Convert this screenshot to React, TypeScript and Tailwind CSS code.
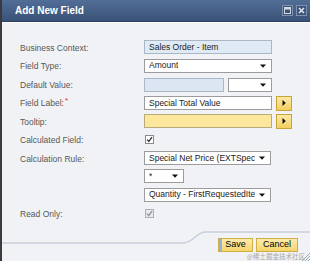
import React from "react";

const font = { fontFamily: '"Liberation Sans", Arial, sans-serif' };

function Arrow() {
  return (
    <svg width="6" height="4" viewBox="0 0 6 4" className="ml-auto shrink-0">
      <path d="M0 0.5 L6 0.5 L3 3.8 Z" fill="#111" />
    </svg>
  );
}

function Select({ text, w }: { text: string; w: string }) {
  return (
    <div
      className={`${w} h-[14px] flex items-center bg-white border border-[#9c9c9c] pl-[4px] pr-[5px] text-[8.5px] text-[#222] overflow-hidden whitespace-nowrap`}
    >
      <span className="overflow-hidden">{text}</span>
      <Arrow />
    </div>
  );
}

function ArrowButton() {
  return (
    <div className="w-[16px] h-[15px] ml-[4px] flex items-center justify-center border border-[#c9a43a] bg-gradient-to-b from-[#fdeaa6] to-[#f4cf5e]">
      <svg width="4" height="6" viewBox="0 0 4 6">
        <path d="M0.5 0 L3.8 3 L0.5 6 Z" fill="#111" />
      </svg>
    </div>
  );
}

function Checkbox({ disabled }: { disabled?: boolean }) {
  return (
    <div
      className={`ml-[1px] w-[9px] h-[9px] flex items-center justify-center border ${
        disabled ? "border-[#a9b0ba] bg-[#e6e9ee]" : "border-[#8a8a8a] bg-white"
      }`}
    >
      <svg width="7" height="7" viewBox="0 0 7 7">
        <path
          d="M1 3.6 L2.8 5.4 L6 1.2"
          fill="none"
          stroke={disabled ? "#8c929c" : "#333"}
          strokeWidth="1.3"
        />
      </svg>
    </div>
  );
}

function Row({
  h,
  label,
  required,
  children,
}: {
  h: string;
  label?: string;
  required?: boolean;
  children: React.ReactNode;
}) {
  return (
    <div className={`${h} flex items-center`}>
      <div className="w-[124px] text-[8.5px] text-[#585858] leading-[14px] pt-[1px]">
        {label}
        {required && (
          <span className="text-[#e0202a] text-[8px] relative top-[-3px] ml-[1px]">*</span>
        )}
      </div>
      <div className="flex items-center">{children}</div>
    </div>
  );
}

export default function App() {
  return (
    <div className="w-[310px] h-[261px] flex overflow-hidden" style={font}>
      <div className="w-[2px] h-full bg-[#3b3b3b]" />
      <div className="flex-1 flex flex-col bg-[#f0f2f5]">
        {/* Header */}
        <div className="h-[22px] shrink-0 flex items-center bg-gradient-to-b from-[#516e97] to-[#3a5277] border-b border-[#2d4163] pl-[13px] pr-[3px]">
          <span className="text-white font-bold text-[10px] leading-none">Add New Field</span>
          <div className="ml-auto flex gap-[3px] items-center">
            <div className="w-[11px] h-[11px] border border-[#7e92b0] bg-[#3c5479] flex items-center justify-center">
              <svg width="7" height="7" viewBox="0 0 7 7">
                <rect x="0.5" y="0.5" width="6" height="6" fill="none" stroke="#d3dbe6" strokeWidth="1" />
                <rect x="0.5" y="0.5" width="6" height="2" fill="#d3dbe6" />
              </svg>
            </div>
            <div className="w-[11px] h-[11px] border border-[#7e92b0] bg-[#3c5479] flex items-center justify-center">
              <svg width="7" height="7" viewBox="0 0 7 7">
                <path d="M1 1 L6 6 M6 1 L1 6" stroke="#dfe5ee" strokeWidth="1.6" />
              </svg>
            </div>
          </div>
        </div>
        <div className="h-[1px] bg-white shrink-0" />

        {/* Form */}
        <div className="flex flex-col pl-[18px] pt-[15px]">
          <Row h="h-[18px]" label="Business Context:">
            <div className="w-[128px] h-[14px] flex items-center border border-[#a9b7c7] bg-[#e0eaf4] pl-[4px] text-[8.5px] text-[#222] whitespace-nowrap">
              Sales Order - Item
            </div>
          </Row>
          <Row h="h-[19px]" label="Field Type:">
            <Select text="Amount" w="w-[128px]" />
          </Row>
          <Row h="h-[19px]" label="Default Value:">
            <div className="w-[80px] h-[14px] border border-[#a9b7c7] bg-[#dbe6f2]" />
            <div className="ml-[4px]">
              <Select text="" w="w-[44px]" />
            </div>
          </Row>
          <Row h="h-[18px]" label="Field Label:" required>
            <div className="w-[128px] h-[14px] flex items-center border border-[#9c9c9c] bg-white pl-[4px] text-[8.5px] text-[#222] whitespace-nowrap">
              Special Total Value
            </div>
            <ArrowButton />
          </Row>
          <Row h="h-[18px]" label="Tooltip:">
            <div className="w-[128px] h-[14px] border border-[#b9ab7a] bg-[#fde79c]" />
            <ArrowButton />
          </Row>
          <Row h="h-[19px]" label="Calculated Field:">
            <Checkbox />
          </Row>
          <Row h="h-[18px]" label="Calculation Rule:">
            <Select text="Special Net Price (EXTSpec" w="w-[127px]" />
          </Row>
          <Row h="h-[18px]">
            <Select text="*" w="w-[40px]" />
          </Row>
          <Row h="h-[19px]">
            <Select text="Quantity - FirstRequestedIte" w="w-[127px]" />
          </Row>
          <Row h="h-[18px]" label="Read Only:">
            <Checkbox disabled />
          </Row>
        </div>

        {/* Footer */}
        <div className="relative flex-1 flex justify-end items-start pt-[16px] pr-[12px] gap-[3px]">
          <svg
            className="absolute left-0 top-0"
            width="308"
            height="39"
            viewBox="0 0 308 39"
          >
            <path
              d="M0 21 L181 21 C192 21 193 10 204 10 L308 10"
              fill="none"
              stroke="#c6d0dc"
              strokeWidth="1.5"
            />
          </svg>
          <div className="relative h-[14px] w-[35px] flex items-center justify-center border border-[#d1ad45] bg-gradient-to-b from-[#fdecab] to-[#f5d46a] text-[9px] text-black">
            <div className="absolute left-0 top-0 bottom-0 w-[3px] bg-[#8fb2e3]" />
            Save
          </div>
          <div className="relative h-[14px] w-[42px] flex items-center justify-center border border-[#d1ad45] bg-gradient-to-b from-[#fdecab] to-[#f5d46a] text-[9px] text-black">
            Cancel
          </div>
          <div
            className="absolute right-[5px] bottom-[2px] text-[6.5px] text-[#a8a8a8] whitespace-nowrap leading-none"
            style={{ fontFamily: '"Noto Sans CJK SC", "Liberation Sans", sans-serif' }}
          >
            @稀土掘金技术社区
          </div>
          <svg className="absolute right-0 bottom-0" width="9" height="9" viewBox="0 0 9 9">
            <path d="M9 1 L1 9 M9 4 L4 9 M9 7 L7 9" stroke="#9aa3ae" strokeWidth="1" />
          </svg>
        </div>
      </div>
    </div>
  );
}
